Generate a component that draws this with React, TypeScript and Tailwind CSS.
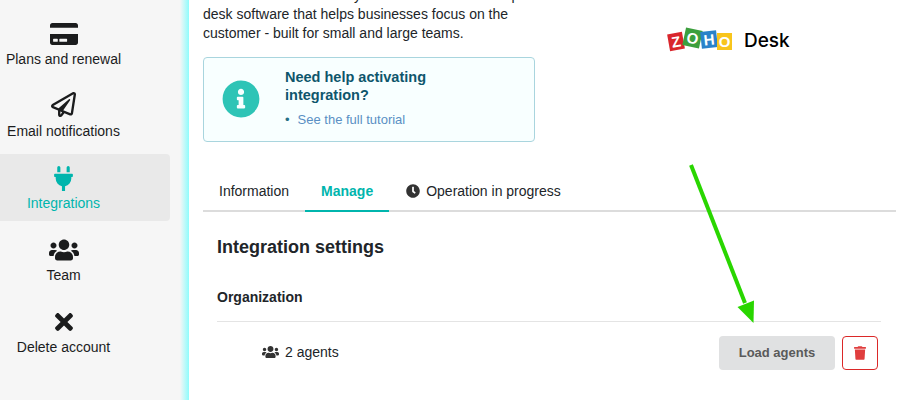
import { FaCreditCard, FaRegPaperPlane, FaPlug, FaUsers, FaTimes, FaInfoCircle, FaClock, FaTrash } from "react-icons/fa"

const navItems = [
  { label: "Plans and renewal", icon: <FaCreditCard className="h-[28px] w-[28px]" /> },
  { label: "Email notifications", icon: <FaRegPaperPlane className="mb-[4px] h-[25px] w-[25px]" /> },
  { label: "Integrations", icon: <FaPlug className="h-[25px] w-[25px]" />, active: true },
  { label: "Team", icon: <FaUsers className="ml-[1px] h-[26px] w-[30px]" /> },
  { label: "Delete account", icon: <FaTimes className="mb-[1px] h-[26px] w-[22px]" /> },
]

function ZohoLogo() {
  const tiles = [
    { x: 1.5, y: 6, w: 15, h: 17, r: -10, fill: "#d9262c", letter: "Z" },
    { x: 17, y: 2, w: 17, h: 18, r: 12, fill: "#3c9f3d", letter: "O" },
    { x: 34, y: 4, w: 16, h: 17, r: -6, fill: "#2a82c9", letter: "H" },
    { x: 50, y: 6, w: 15, h: 17, r: 0, fill: "#f8c51c", letter: "O" },
  ]
  return (
    <svg width="66" height="26" viewBox="0 0 66 26">
      {tiles.map((t, i) => (
        <g key={i} transform={`rotate(${t.r} ${t.x + t.w / 2} ${t.y + t.h / 2})`}>
          <rect x={t.x} y={t.y} width={t.w} height={t.h} fill={t.fill} />
          <text
            x={t.x + t.w / 2}
            y={t.y + t.h / 2 + 5.5}
            textAnchor="middle"
            fontSize="15"
            fontWeight="700"
            fontFamily="Liberation Sans, sans-serif"
            fill="#fff"
          >
            {t.letter}
          </text>
        </g>
      ))}
    </svg>
  )
}

export default function App() {
  return (
    <div className="relative flex h-[400px] w-[910px] overflow-hidden bg-white font-['Liberation_Sans',Arial,sans-serif] text-[14px] text-[#212529]">
      {/* Sidebar */}
      <aside className="flex w-[189px] shrink-0 flex-col gap-[5px] bg-[linear-gradient(to_right,#f6f6f6_180px,#8ffcfc_189px)] pt-[10px]">
        {navItems.map((item) => (
          <div
            key={item.label}
            className={`flex h-[67px] w-[170px] flex-col items-start rounded-r-[4px] ${item.active ? "bg-[#e9e9e9] text-[#00b5ad]" : "text-[#1b1c1d]"}`}
          >
            <div className="flex h-[40px] w-[127px] items-center justify-center pt-[8px]">{item.icon}</div>
            <span className="w-[127px] whitespace-nowrap text-center text-[14px] leading-[19px]">{item.label}</span>
          </div>
        ))}
      </aside>

      {/* Main */}
      <main className="w-[721px] pl-[14px]">
        <div className="flex">
          <div className="w-[332px] shrink-0">
            <p className="mt-[-14px] leading-[19px]">
              Zoho Desk is the industry's first context-aware help
              <br />
              desk software that helps businesses focus on the
              <br />
              customer - built for small and large teams.
            </p>
            <div className="mt-[14px] flex h-[85px] items-center rounded-[4px] border border-[#a9d5de] bg-[#f8ffff]">
              <FaInfoCircle className="ml-[18px] mb-[2px] h-[38px] w-[38px] shrink-0 text-[#2ec4b6]" />
              <div className="ml-[25px] mb-[2px]">
                <div className="text-[14.5px] font-bold leading-[18px] text-[#0e566c]">
                  Need help activating
                  <br />
                  integration?
                </div>
                <div className="mt-[7px] flex items-center text-[13px] leading-[18px] text-[#5a8fc4]">
                  <span className="mr-[8px] text-[#276f86]">•</span>
                  See the full tutorial
                </div>
              </div>
            </div>
          </div>
          <div className="ml-[132px] mt-[27px] flex h-[26px] items-center">
            <ZohoLogo />
            <span className="ml-[11px] mt-[3px] font-['Inter',sans-serif] text-[19px] font-medium text-black">Desk</span>
          </div>
        </div>

        {/* Tabs */}
        <div className="mt-[26px] flex w-[693px] border-b-2 border-[#dcdcdc]">
          <div className="flex h-[42px] items-center px-[16px] pt-[4px]">Information</div>
          <div className="-mb-[2px] flex h-[44px] items-center border-b-2 border-[#00b5ad] px-[16px] pt-[4px] font-bold text-[#00b5ad]">Manage</div>
          <div className="ml-[1px] flex h-[42px] items-center gap-[6px] px-[16px] pt-[4px]">
            <FaClock className="h-[14px] w-[14px] text-[#333]" />
            Operation in progress
          </div>
        </div>

        {/* Settings */}
        <div className="w-[678px] pl-[14px]">
          <h2 className="mt-[23px] text-[18px] font-bold leading-[24px]">Integration settings</h2>
          <h3 className="mt-[29px] font-bold leading-[18px]">Organization</h3>
          <div className="mt-[15px] flex items-center border-t border-[#e4e4e4] pt-[14px] pr-[3px]">
            <div className="mb-[2px] ml-[45px] flex items-center gap-[6px]">
              <FaUsers className="h-[14px] w-[17px] text-[#333]" />
              2 agents
            </div>
            <button className="ml-auto h-[34px] w-[116px] rounded-[4px] bg-[#e0e1e2] text-[13px] font-bold text-[#5a5a5a]">Load agents</button>
            <button className="ml-[7px] flex h-[34px] w-[36px] items-center justify-center rounded-[4px] border border-[#db2828] text-[#e03e3e]">
              <FaTrash className="h-[14px] w-[12px]" />
            </button>
          </div>
        </div>
      </main>

      {/* Annotation arrow */}
      <svg className="absolute left-0 top-0" width="910" height="400" viewBox="0 0 910 400">
        <line x1="691" y1="165" x2="745" y2="303" stroke="#29d600" strokeWidth="4" />
        <polygon points="753.5,323 737.5,307 754,300.5" fill="#29d600" />
      </svg>
    </div>
  )
}
